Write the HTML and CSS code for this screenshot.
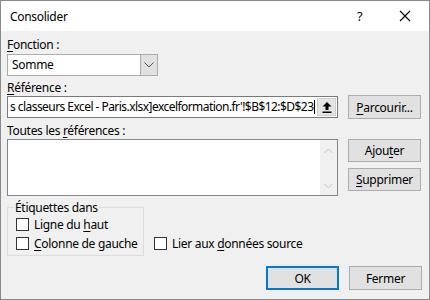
FILE: index.html
```html
<!DOCTYPE html>
<html lang="fr">
<head>
<meta charset="utf-8">
<title>Consolider</title>
<link rel="stylesheet" href="styles.css">
</head>
<body>
<div class="win">
  <div class="titlebar">
    <span class="title">Consolider</span>
    <span class="help">?</span>
    <svg class="close" width="12" height="12" viewBox="0 0 12 12"><path d="M1 1 L11 11 M11 1 L1 11" stroke="#000" stroke-width="1.1" fill="none"/></svg>
  </div>
  <div class="content">
    <div class="label l-fonction"><u>F</u>onction :</div>
    <div class="combo">
      <span class="combo-text">Somme</span>
      <span class="combo-btn"><svg width="10" height="6" viewBox="0 0 10 6"><path d="M0.5 0.5 L5 5 L9.5 0.5" stroke="#555" stroke-width="1" fill="none"/></svg></span>
    </div>
    <div class="label l-ref"><u>R</u>éférence :</div>
    <div class="row-ref">
      <div class="refbox">
        <span class="reftext"><span>s classeurs Excel - Paris.xlsx]excelformation.fr'!$B$12:$D$23</span><span class="caret"></span></span>
        <span class="refbtn"><svg width="10" height="11" viewBox="0 0 10 11"><path d="M5 0 L9.5 4.5 L6.5 4.5 L6.5 8 L3.5 8 L3.5 4.5 L0.5 4.5 Z" fill="#000"/><rect x="0.5" y="9.5" width="9" height="1.5" fill="#000"/></svg></span>
      </div>
      <button class="btn"><u>P</u>arcourir...</button>
    </div>
    <div class="label l-all">Toutes les <u>r</u>éférences :</div>
    <div class="row-list">
      <div class="listbox">
        <div class="list-area"></div>
        <div class="scroll">
          <svg width="9" height="6" viewBox="0 0 9 6"><path d="M0.5 5 L4.5 1 L8.5 5" stroke="#c2c2c2" stroke-width="1" fill="none"/></svg>
          <svg width="9" height="6" viewBox="0 0 9 6"><path d="M0.5 1 L4.5 5 L8.5 1" stroke="#c2c2c2" stroke-width="1" fill="none"/></svg>
        </div>
      </div>
      <div class="side-btns">
        <button class="btn">Ajou<u>t</u>er</button>
        <button class="btn"><u>S</u>upprimer</button>
      </div>
    </div>
    <div class="row-group">
      <fieldset class="group">
        <legend>Étiquettes dans</legend>
        <label class="check"><span class="box"></span><span>Ligne du <u>h</u>aut</span></label>
        <label class="check"><span class="box"></span><span><u>C</u>olonne de gauche</span></label>
      </fieldset>
      <label class="check lier"><span class="box"></span><span>Lier aux <u>d</u>onnées source</span></label>
    </div>
    <div class="row-actions">
      <button class="btn ok">OK</button>
      <button class="btn">Fermer</button>
    </div>
  </div>
</div>
</body>
</html>
```
FILE: styles.css
```css
* { box-sizing: border-box; }
html, body { margin: 0; padding: 0; }
body {
  font-family: "Noto Sans", "Open Sans", sans-serif;
  font-size: 12px;
  letter-spacing: -0.3px;
  color: #000;
  background: #f0f0f0;
}
u { text-decoration: underline; text-underline-offset: 2px; }
.win {
  width: 430px;
  height: 300px;
  border: 1px solid #8a8a8a;
  display: flex;
  flex-direction: column;
  background: #f0f0f0;
}
.titlebar {
  height: 30px;
  background: #fff;
  display: flex;
  align-items: center;
  padding-left: 9px;
}
.title { flex: 1; font-size: 12px; }
.help { width: 12px; margin-right: 30px; font-size: 13px; }
.close { margin-right: 18px; }
.content {
  flex: 1;
  padding: 6px 7px 0 6px;
  display: flex;
  flex-direction: column;
}
.label { line-height: 15px; height: 15px; }
.combo {
  margin-top: 2px;
  width: 151px;
  height: 22px;
  border: 1px solid #acacac;
  background: #fff;
  display: flex;
}
.combo-text { flex: 1; padding-left: 4px; line-height: 20px; }
.combo-btn {
  width: 17px;
  background: #e1e1e1;
  border-left: 1px solid #acacac;
  display: flex;
  align-items: center;
  justify-content: center;
}
.l-ref { margin-top: 4px; }
.row-ref {
  display: flex;
  align-items: center;
  height: 24px;
}
.refbox {
  width: 331px;
  height: 22px;
  border: 1px solid #7a7a7a;
  background: #fff;
  display: flex;
  align-items: center;
  overflow: hidden;
}
.reftext {
  flex: 1;
  min-width: 0;
  white-space: nowrap;
  overflow: hidden;
  padding-left: 2px;
  display: flex;
  align-items: center;
  line-height: 20px;
  letter-spacing: -0.55px;
}
.caret {
  display: inline-block;
  flex: none;
  width: 1px;
  height: 14px;
  background: #000;
  margin-left: 1px;
}
.refbtn {
  width: 19px;
  height: 18px;
  margin-right: 1px;
  background: #e5e5e5;
  border: 1px solid #cfcfcf;
  display: flex;
  align-items: center;
  justify-content: center;
  flex: none;
}
.btn {
  font-family: inherit;
  font-size: 12px;
  letter-spacing: -0.3px;
  color: #000;
  width: 73px;
  height: 24px;
  margin: 0 0 0 10px;
  padding: 0;
  background: #e1e1e1;
  border: 1px solid #adadad;
  border-radius: 0;
}
.l-all { margin-top: 4px; }
.row-list {
  display: flex;
  margin-top: 1px;
}
.listbox {
  width: 331px;
  height: 57px;
  border: 1px solid #828790;
  background: #fff;
  display: flex;
}
.list-area { flex: 1; }
.scroll {
  width: 17px;
  background: #f0f0f0;
  display: flex;
  flex-direction: column;
  justify-content: space-between;
  align-items: center;
  padding: 8px 0 6px;
}
.side-btns {
  display: flex;
  flex-direction: column;
  gap: 6px;
}
.side-btns .btn { height: 23px; }
.row-group {
  display: flex;
  align-items: flex-end;
  margin-top: 4px;
}
.group {
  margin: 0;
  width: 137px;
  border: 1px solid #dcdcdc;
  padding: 3px 0 5px 8px;
  display: flex;
  flex-direction: column;
  gap: 6px;
}
.group legend {
  padding: 0 1px;
  margin-left: -2px;
  line-height: 15px;
}
.check {
  display: flex;
  align-items: center;
  gap: 5px;
  height: 13px;
  white-space: nowrap;
}
.box {
  width: 13px;
  height: 13px;
  border: 1px solid #333;
  background: #fff;
  flex: none;
}
.lier { margin-left: 10px; margin-bottom: 6px; }
.row-actions {
  display: flex;
  justify-content: flex-end;
  margin-top: 10px;
}
.btn.ok {
  border: 2px solid #0078d7;
}
```
